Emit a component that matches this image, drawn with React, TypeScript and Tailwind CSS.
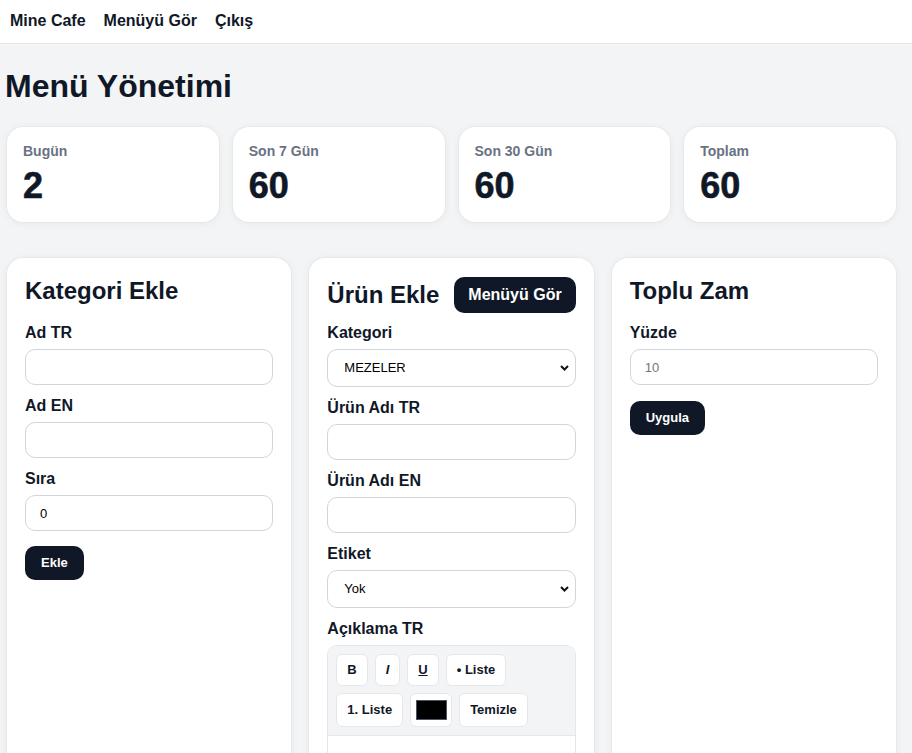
import React, { useState } from 'react';

type Stat = { label: string; value: number };

const stats: Stat[] = [
  { label: 'Bugün', value: 2 },
  { label: 'Son 7 Gün', value: 60 },
  { label: 'Son 30 Gün', value: 60 },
  { label: 'Toplam', value: 60 },
];

const cardClass =
  'bg-white rounded-2xl shadow-[0_0_0_1px_rgba(0,0,0,0.025),0_1px_8px_rgba(0,0,0,0.06)]';

const inputClass =
  'block w-full h-9 px-[14px] text-[13px] text-black bg-white border border-gray-300 rounded-[10px] outline-none placeholder:text-[#757575]';

const labelClass = 'block text-base font-bold leading-5 text-gray-900 mb-[6px]';

const darkButton =
  'h-[34px] px-4 text-[13px] font-bold text-white bg-gray-900 rounded-[10px]';

function Field({ label, children }: { label: string; children: React.ReactNode }) {
  return (
    <div className="mb-[11px]">
      <label className={labelClass}>{label}</label>
      {children}
    </div>
  );
}

function Select({ value, options }: { value: string; options: string[] }) {
  const [selected, setSelected] = useState(value);
  return (
    <div className="relative">
      <select
        value={selected}
        onChange={(e) => setSelected(e.target.value)}
        className="block w-full h-[38px] pl-[16px] pr-8 text-[13px] text-black bg-white border border-gray-300 rounded-[10px] outline-none appearance-none"
      >
        {options.map((o) => (
          <option key={o}>{o}</option>
        ))}
      </select>
      <svg
        className="absolute right-[7px] top-1/2 -translate-y-1/2 pointer-events-none"
        width="9"
        height="6"
        viewBox="0 0 9 6"
        fill="none"
      >
        <path d="M1 1l3.5 3.5L8 1" stroke="#111" strokeWidth="2" />
      </svg>
    </div>
  );
}

function ToolButton({ children, className = '' }: { children: React.ReactNode; className?: string }) {
  return (
    <button
      type="button"
      className={`h-8 px-[10px] text-[13px] font-bold text-gray-900 bg-white border border-gray-200 rounded-md ${className}`}
    >
      {children}
    </button>
  );
}

function RichEditor() {
  return (
    <div className="border border-gray-200 rounded-[10px] overflow-hidden">
      <div className="flex flex-wrap gap-[7px] p-2 bg-gray-100 border-b border-gray-200">
        <ToolButton>B</ToolButton>
        <ToolButton className="italic">I</ToolButton>
        <ToolButton className="underline">U</ToolButton>
        <ToolButton>• Liste</ToolButton>
        <ToolButton className="self-stretch h-auto">1. Liste</ToolButton>
        <button
          type="button"
          className="w-[42px] h-[34px] flex items-center justify-center bg-white border border-gray-200 rounded-md"
        >
          <span className="block w-[31px] h-[20px] bg-black border border-gray-600" />
        </button>
        <ToolButton className="self-stretch h-auto">Temizle</ToolButton>
      </div>
      <div className="min-h-[140px] bg-white" contentEditable suppressContentEditableWarning />
    </div>
  );
}

export default function App() {
  return (
    <div className="min-h-screen bg-gray-100 font-['Liberation_Sans',Arial,sans-serif] text-gray-900">
      <nav className="h-[44px] pb-[2px] flex items-center gap-[18px] px-[10px] bg-white border-b border-gray-200">
        <span className="text-base font-bold">Mine Cafe</span>
        <a href="#" className="text-base font-bold">Menüyü Gör</a>
        <a href="#" className="text-base font-bold">Çıkış</a>
      </nav>

      <main className="pl-[7px] pr-4 pt-[22px]">
        <h1 className="-ml-[2px] text-[32px] font-bold leading-10 mb-[21px]">Menü Yönetimi</h1>

        <div className="grid grid-cols-4 gap-[14px]">
          {stats.map((s) => (
            <div key={s.label} className={`${cardClass} px-4 pt-[14px] pb-[16px]`}>
              <div className="text-sm font-bold leading-5 text-gray-500">{s.label}</div>
              <div className="mt-[5px] text-4xl font-extrabold leading-10 [-webkit-text-stroke:0.6px_#111827]">
                {s.value}
              </div>
            </div>
          ))}
        </div>

        <div className="grid grid-cols-3 gap-[18px] mt-9 pb-6">
          {/* kategori */}
          <section className={`${cardClass} px-[18px] pt-[19px] pb-[18px]`}>
            <h2 className="text-2xl font-bold leading-7 mb-[18px]">Kategori Ekle</h2>
            <Field label="Ad TR">
              <input className={inputClass} />
            </Field>
            <Field label="Ad EN">
              <input className={inputClass} />
            </Field>
            <Field label="Sıra">
              <input className={inputClass} defaultValue="0" />
            </Field>
            <button className={`${darkButton} mt-[4px]`}>Ekle</button>
          </section>

          {/* urun */}
          <section className={`${cardClass} px-[18px] pt-[19px] pb-[18px]`}>
            <div className="flex items-center justify-between mb-[10px]">
              <h2 className="text-2xl font-bold leading-7">Ürün Ekle</h2>
              <button className="h-9 px-[14px] text-base font-bold text-white bg-gray-900 rounded-[10px]">
                Menüyü Gör
              </button>
            </div>
            <Field label="Kategori">
              <Select value="MEZELER" options={['MEZELER', 'ANA YEMEKLER', 'TATLILAR', 'İÇECEKLER']} />
            </Field>
            <Field label="Ürün Adı TR">
              <input className={inputClass} />
            </Field>
            <Field label="Ürün Adı EN">
              <input className={inputClass} />
            </Field>
            <Field label="Etiket">
              <Select value="Yok" options={['Yok', 'Yeni', 'Popüler', 'Acılı']} />
            </Field>
            <Field label="Açıklama TR">
              <RichEditor />
            </Field>
            <Field label="Açıklama EN">
              <RichEditor />
            </Field>
            <Field label="Fiyat">
              <input className={inputClass} placeholder="0.00" />
            </Field>
            <button className={`${darkButton} mt-[4px]`}>Ekle</button>
          </section>

          {/* zam */}
          <section className={`${cardClass} px-[18px] pt-[19px] pb-[18px]`}>
            <h2 className="text-2xl font-bold leading-7 mb-[18px]">Toplu Zam</h2>
            <Field label="Yüzde">
              <input className={inputClass} placeholder="10" />
            </Field>
            <button className={`${darkButton} mt-[5px]`}>Uygula</button>
          </section>
        </div>
      </main>
    </div>
  );
}
